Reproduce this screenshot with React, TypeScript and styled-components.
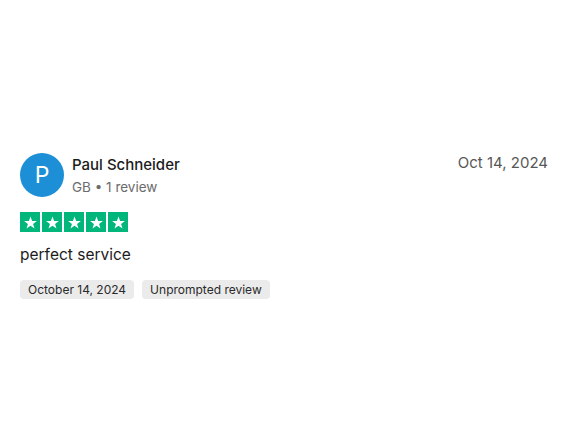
import React, { FC } from "react";
import styled, { createGlobalStyle } from "styled-components";

const GlobalStyle = createGlobalStyle`
    html, body {
        margin: 0;
        padding: 0;
        background: #ffffff;
        font-family: Inter, "Noto Sans", "Liberation Sans", sans-serif;
        color: #1a1a1a;
    }
`;

const Page = styled.div`
    width: 586px;
    height: 440px;
    box-sizing: border-box;
    padding: 153px 38px 0 20px;
`;

const Card = styled.article`
    width: 100%;
    display: flex;
    flex-direction: column;
`;

const Header = styled.div`
    display: flex;
    align-items: flex-start;
    justify-content: space-between;
`;

const Consumer = styled.div`
    display: flex;
    align-items: center;
    gap: 8px;
`;

const Avatar = styled.div`
    width: 44px;
    height: 44px;
    border-radius: 50%;
    background: #1c8fd6;
    color: #ffffff;
    display: flex;
    align-items: center;
    justify-content: center;
    font-size: 23px;
    font-weight: 400;
`;

const ConsumerInfo = styled.div`
    display: flex;
    flex-direction: column;
    gap: 3px;
`;

const Name = styled.span`
    font-size: 15px;
    font-weight: 500;
    color: #1c1c1c;
    line-height: 20px;
`;

const Meta = styled.span`
    font-size: 13.5px;
    color: #6b6b6b;
    line-height: 18px;
`;

const DateLabel = styled.time`
    font-size: 15px;
    color: #575757;
    line-height: 20px;
    margin-top: 0;
`;

const Stars = styled.div`
    display: flex;
    gap: 2px;
    margin-top: 15px;
`;

const StarBox = styled.div<{ fill: string }>`
    width: 20px;
    height: 20px;
    background: ${props => props.fill};
    display: flex;
    align-items: center;
    justify-content: center;
`;

const ReviewText = styled.p`
    margin: 13px 0 0;
    font-size: 15.5px;
    color: #1c1c1c;
    line-height: 20px;
`;

const Tags = styled.div`
    display: flex;
    gap: 8px;
    margin-top: 15px;
`;

const Tag = styled.span`
    background: #ebebeb;
    border-radius: 4px;
    padding: 0 8px;
    height: 19px;
    display: flex;
    align-items: center;
    font-size: 12px;
    color: #2a2a2a;
`;

const Star: FC = () => (
    <svg width="15" height="15" viewBox="0 0 24 24">
        <path fill="#ffffff" d="M12 2.5l2.6 7.2h7.6l-6.1 4.5 2.3 7.3L12 17l-6.4 4.5 2.3-7.3-6.1-4.5h7.6z" />
    </svg>
);

const App: FC = () => {
    return (
        <>
            <GlobalStyle />
            <Page>
                <Card>
                    <Header>
                        <Consumer>
                            <Avatar>P</Avatar>
                            <ConsumerInfo>
                                <Name>Paul Schneider</Name>
                                <Meta>GB • 1 review</Meta>
                            </ConsumerInfo>
                        </Consumer>
                        <DateLabel>Oct 14, 2024</DateLabel>
                    </Header>
                    <Stars>
                        {[0, 1, 2, 3, 4].map(i => (
                            <StarBox key={i} fill="#00b67a"><Star /></StarBox>
                        ))}
                    </Stars>
                    <ReviewText>perfect service</ReviewText>
                    <Tags>
                        <Tag>October 14, 2024</Tag>
                        <Tag>Unprompted review</Tag>
                    </Tags>
                </Card>
            </Page>
        </>
    );
};

export default App;
